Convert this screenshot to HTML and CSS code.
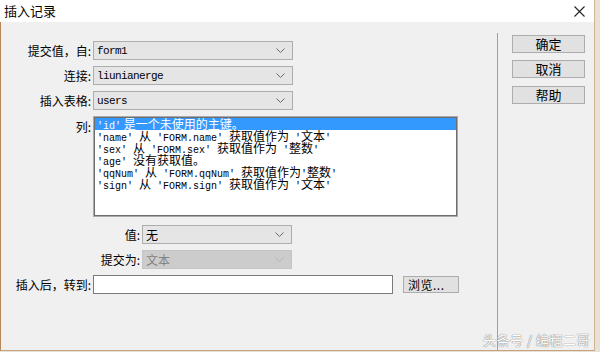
FILE: index.html
```html
<!DOCTYPE html>
<html lang="zh-CN">
<head>
  <meta charset="UTF-8" />
  <title>插入记录</title>
  <link rel="stylesheet" href="styles.css">
</head>
<body>

  <div class="window">
    <div class="titlebar">
      <span class="title">插入记录</span>
      <svg class="close" width="11" height="11" viewBox="0 0 11 11">
        <path d="M0.5 0.5 L10.5 10.5 M10.5 0.5 L0.5 10.5" stroke="#222" stroke-width="1.1" fill="none" />
      </svg>
    </div>

    <div class="content">
      <!-- form fields -->
      <div class="main">
        <div class="row">
          <label class="lbl">提交值，自:</label>
          <div class="select wide"><span class="mono">form1</span><svg class="chev" width="9" height="5" viewBox="0 0 9 5"><path d="M0.5 0.5 L4.5 4.5 L8.5 0.5" /></svg></div>
        </div>
        <div class="row">
          <label class="lbl">连接:</label>
          <div class="select wide"><span class="mono">liunianerge</span><svg class="chev" width="9" height="5" viewBox="0 0 9 5"><path d="M0.5 0.5 L4.5 4.5 L8.5 0.5" /></svg></div>
        </div>
        <div class="row">
          <label class="lbl">插入表格:</label>
          <div class="select wide"><span class="mono">users</span><svg class="chev" width="9" height="5" viewBox="0 0 9 5"><path d="M0.5 0.5 L4.5 4.5 L8.5 0.5" /></svg></div>
        </div>
        <div class="row top">
          <label class="lbl col-lbl">列:</label>
          <div class="listbox">
            <div class="item selected"><span class="k">'id'</span> 是一个未使用的主键。</div>
            <div class="item"><span class="k">'name' </span>从<span class="k"> 'FORM.name' </span>获取值作为<span class="k"> '</span>文本<span class="k">'</span></div>
            <div class="item"><span class="k">'sex' </span>从<span class="k"> 'FORM.sex' </span>获取值作为<span class="k"> '</span>整数<span class="k">'</span></div>
            <div class="item"><span class="k">'age' </span>没有获取值。</div>
            <div class="item"><span class="k">'qqNum' </span>从<span class="k"> 'FORM.qqNum' </span>获取值作为<span class="k">'</span>整数<span class="k">'</span></div>
            <div class="item"><span class="k">'sign' </span>从<span class="k"> 'FORM.sign' </span>获取值作为<span class="k"> '</span>文本<span class="k">'</span></div>
          </div>
        </div>
        <div class="row sub first-sub">
          <label class="lbl lbl-sub">值:</label>
          <div class="select narrow"><span>无</span><svg class="chev" width="9" height="5" viewBox="0 0 9 5"><path d="M0.5 0.5 L4.5 4.5 L8.5 0.5" /></svg></div>
        </div>
        <div class="row sub">
          <label class="lbl lbl-sub">提交为:</label>
          <div class="select narrow disabled"><span>文本</span><svg class="chev" width="9" height="5" viewBox="0 0 9 5"><path d="M0.5 0.5 L4.5 4.5 L8.5 0.5" /></svg></div>
        </div>
        <div class="row">
          <label class="lbl">插入后，转到:</label>
          <input type="text" class="goto" />
          <button class="browse">浏览...</button>
        </div>
      </div>

      <div class="sep"></div>

      <!-- dialog buttons -->
      <div class="side">
        <button class="btn">确定</button>
        <button class="btn">取消</button>
        <button class="btn help">帮助</button>
      </div>

      <div class="mark">头条号 / 编程二哥</div>
    </div>
  </div>

</body>
</html>
```

FILE: styles.css
```css
html, body {
  margin: 0;
  padding: 0;
}

body {
  background: #e6e2da;
  font-family: "Noto Sans CJK SC", sans-serif;
  font-size: 12px;
  color: #000;
}

.window {
  width: 595px;
  height: 351px;
  display: flex;
  flex-direction: column;
  border-right: 1px solid #d4b38e;
  box-sizing: border-box;
}

.titlebar {
  height: 22px;
  background: #fff;
  display: flex;
  align-items: center;
  justify-content: space-between;
  padding: 0 9px 0 4px;
}

.title {
  font-size: 13px;
  line-height: 22px;
}

.content {
  flex: 1;
  position: relative;
  display: flex;
  background: #f0f0f0;
  border-left: 1px solid #b8865a;
  border-bottom: 1px solid #c9a27b;
}

.main {
  width: 496px;
  padding-top: 19px;
}

.row {
  display: flex;
  align-items: center;
  height: 19px;
  margin-bottom: 6px;
}

.row.top {
  align-items: flex-start;
  height: 101px;
}

.row.first-sub {
  margin-top: 8px;
}

.lbl {
  width: 90px;
  text-align: right;
  padding-right: 2px;
  white-space: nowrap;
  line-height: 19px;
}

.lbl-sub {
  width: 139px;
}

.col-lbl {
  line-height: 12px;
  padding-top: 5px;
}

.select {
  height: 19px;
  box-sizing: border-box;
  border: 1px solid #adadad;
  background: #e5e5e5;
  display: flex;
  align-items: center;
  justify-content: space-between;
  padding: 0 7px 0 3px;
}

.select.wide {
  width: 200px;
}

.select.narrow {
  width: 150px;
}

.select.disabled {
  background: #cccccc;
  border-color: #c4c4c4;
  color: #838383;
}

.chev path {
  fill: none;
  stroke: #6a6a6a;
  stroke-width: 1;
}

.disabled .chev path {
  stroke: #b5b5b5;
}

.mono {
  font-family: "Liberation Mono", monospace;
  font-size: 11px;
  letter-spacing: -0.6px;
}

.listbox {
  width: 365px;
  height: 101px;
  box-sizing: border-box;
  border: 1px solid #a9a9a9;
  box-shadow: inset 0 0 0 1px #6e6e6e;
  background: #fff;
  padding: 1px;
}

.item {
  height: 12px;
  line-height: 12px;
  white-space: nowrap;
  padding-left: 2px;
  font-size: 12px;
}

.item.selected {
  background: #3399ff;
  color: #fff;
}

.k {
  font-family: "Liberation Mono", monospace;
  font-size: 10px;
  white-space: pre;
}

.goto {
  width: 300px;
  height: 19px;
  box-sizing: border-box;
  border: 1px solid #7a7a7a;
  background: #fff;
  margin: 0;
  padding: 0;
}

.browse {
  margin-left: 10px;
  width: 56px;
  height: 17px;
  box-sizing: border-box;
  border: 1px solid #adadad;
  background: #e1e1e1;
  font-family: "Noto Sans CJK SC", sans-serif;
  font-size: 12px;
  line-height: 15px;
  padding: 0 0 0 4px;
  text-align: left;
  letter-spacing: 0.5px;
}

.sep {
  width: 1px;
  background: #a0a0a0;
  margin-top: 11px;
}

.side {
  display: flex;
  flex-direction: column;
  padding: 13px 0 0 14px;
}

.btn {
  width: 73px;
  height: 18px;
  box-sizing: border-box;
  border: 1px solid #adadad;
  background: #e1e1e1;
  font-family: "Noto Sans CJK SC", sans-serif;
  font-size: 13px;
  line-height: 16px;
  padding: 0;
  margin-bottom: 7px;
}

.btn.help {
  margin-top: 1px;
}

.mark {
  position: absolute;
  right: 4px;
  bottom: 1px;
  font-size: 13px;
  color: #fff;
  text-shadow: 0 0 1px #777, 0 0 1px #777;
  letter-spacing: 0.5px;
}
```
